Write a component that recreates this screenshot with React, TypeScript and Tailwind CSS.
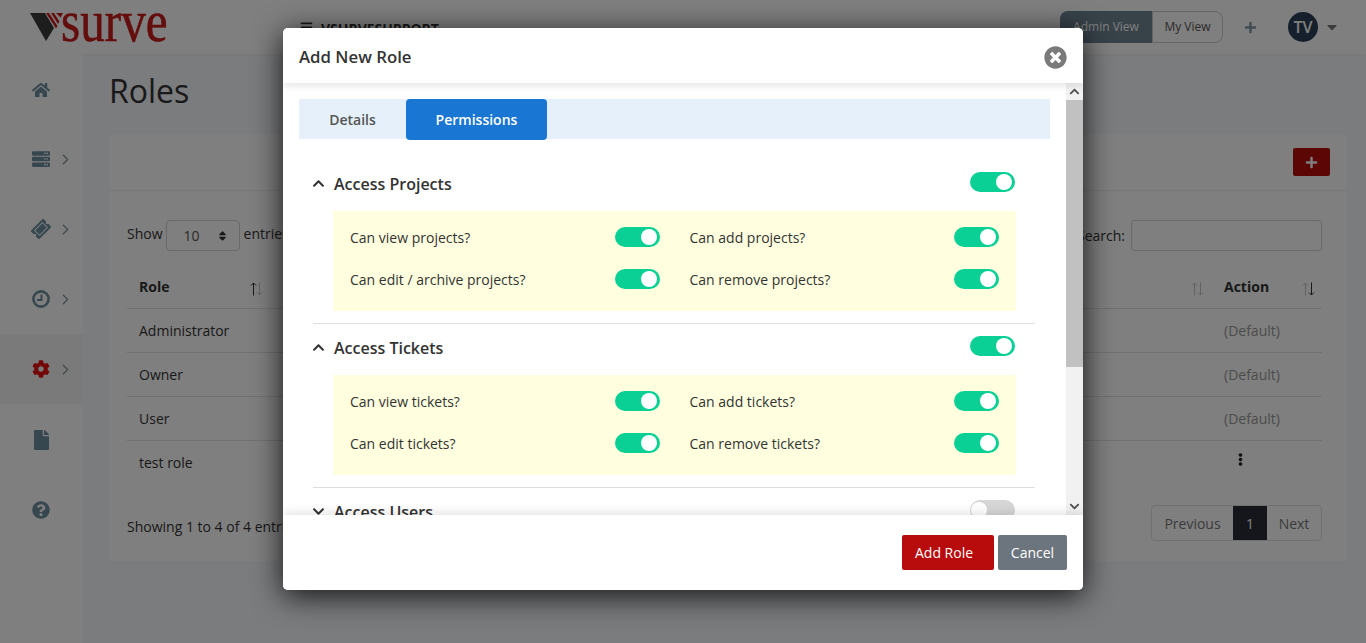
import React from "react";
import { FaHome, FaServer, FaTicketAlt, FaCog, FaFile, FaQuestionCircle, FaTimesCircle, FaPlus, FaChevronUp, FaChevronDown, FaEllipsisV, FaBars, FaCaretDown, FaSort } from "react-icons/fa";
import { LuChevronRight } from "react-icons/lu";

function Toggle({ on = true }: { on?: boolean }) {
  return (
    <div className={on ? "flex h-5 w-[45px] shrink-0 items-center justify-end rounded-full bg-[#0bd095] pr-[3px]" : "flex h-5 w-[45px] shrink-0 items-center justify-start rounded-full bg-[#d6d6d6] pl-[1px]"}>
      <div className="h-4 w-4 rounded-full bg-white" />
    </div>
  );
}

function Perm({ label }: { label: string }) {
  return (
    <div className="flex h-5 items-center justify-between">
      <span className="text-[14px] text-[#333]">{label}</span>
      <Toggle />
    </div>
  );
}

function Section({ title, perms, open = true, on = true, border = true }: { title: string; perms: string[]; open?: boolean; on?: boolean; border?: boolean }) {
  return (
    <div className={border ? "mr-[31px] mb-[13px] ml-[30px] h-[151px] border-b border-[#dedede]" : "mr-[31px] ml-[30px] h-[151px]"}>
      <div className="flex h-5 items-center pr-5">
        <span className="flex w-[21px] justify-start text-[#333]">
          {open ? <FaChevronUp className="-ml-[1px] h-[13px] w-[13px]" /> : <FaChevronDown className="-ml-[1px] h-[13px] w-[13px]" />}
        </span>
        <span className="flex-1 pt-[2px] text-[16px] font-semibold text-[#333]">{title}</span>
        <span className="mb-[2px]"><Toggle on={on} /></span>
      </div>
      <div className="mt-[18px] mr-[19px] ml-5 grid h-[100px] grid-cols-[310px_309.5px] content-start gap-x-[29.5px] gap-y-[22px] bg-[#ffffdf] pt-4 pl-[17px]">
        {perms.map((p) => (
          <Perm key={p} label={p} />
        ))}
      </div>
    </div>
  );
}

function SideItem({ icon, chevron = false, active = false }: { icon: React.ReactNode; chevron?: boolean; active?: boolean }) {
  return (
    <div className={active ? "flex h-[70px] items-center bg-[#f4f4f4] pl-[32px]" : "flex h-[70px] items-center pl-[32px]"}>
      <span className="flex w-[18px] justify-center">{icon}</span>
      {chevron && <LuChevronRight className="ml-[7px] h-[17px] w-[17px] text-[#8a98a0]" />}
    </div>
  );
}

function Sort({ up = false, down = false }: { up?: boolean; down?: boolean }) {
  return (
    <svg width="13" height="14" viewBox="0 0 13 14" fill="none" strokeWidth="1" className="mt-[4px]">
      <path d="M3.500 13.500V1M1 3.500 3.500 1 6 3.500" stroke={up ? "#333" : "#c4c4c4"} />
      <path d="M9.500 .5V13M7 10.500 9.500 13 12 10.500" stroke={down ? "#333" : "#c4c4c4"} />
    </svg>
  );
}

function Row({ name, action, last = false }: { name: string; action: React.ReactNode; last?: boolean }) {
  return (
    <div className={last ? "flex h-11 items-center pb-[2px] text-[14px] text-[#333]" : "flex h-11 items-center border-b border-[#dee2e6] text-[14px] text-[#333]"}>
      <span className="flex-1 pl-3">{name}</span>
      <span className="w-[98px]">{action}</span>
    </div>
  );
}

export default function App() {
  return (
    <div className="relative h-[643px] w-[1366px] overflow-hidden bg-[#f6f8fc] font-['Open_Sans',sans-serif]">
      <header className="flex h-[54px] items-center bg-white shadow-[0_1px_2px_rgba(0,0,0,0.05)]">
        <div className="flex w-[300px] items-center pl-[30px]">
          <svg width="34" height="29" viewBox="0 0 34 29" className="shrink-0">
            <path d="M0 0H15L24 15 16 28Z" fill="#3a3a3a" />
            <path d="M16 0h3l8.500 13-1.500 2.500ZM21 0h3l5.500 8.500L28 11ZM26 0h7l-2.500 4.500Z" fill="#c81a1a" />
          </svg>
          <span className="mb-[12px] -ml-[3px] origin-left scale-x-[0.82] font-['Liberation_Serif',serif] text-[60px] leading-[41px] font-normal text-[#c81a1a] [-webkit-text-stroke:0.6px_#c81a1a]">surve</span>
        </div>
        <FaBars className="h-[13px] w-[13px] text-[#333]" />
        <span className="mt-[2px] ml-2 text-[14px] font-bold text-[#333]">VSURVESUPPORT</span>
        <div className="ml-auto flex items-center">
          <div className="flex h-[32px] text-[12px]">
            <span className="flex w-[92px] items-center justify-center rounded-l-[8px] bg-[#6f8493] text-white">Admin View</span>
            <span className="flex w-[71px] items-center justify-center rounded-r-[8px] border border-[#ccc] text-[#555]">My View</span>
          </div>
          <FaPlus className="ml-[21px] h-[13px] w-[13px] text-[#8398a6]" />
          <span className="ml-[31px] flex h-[30px] w-[30px] items-center justify-center rounded-full bg-[#2a4058] text-[16px] font-semibold text-white">TV</span>
          <FaCaretDown className="mr-[28px] ml-[8px] h-[16px] w-[12px] text-[#777]" />
        </div>
      </header>

      <div className="flex h-[589px]">
        <aside className="w-[83px] shrink-0 bg-white">
          <SideItem icon={<FaHome className="mt-[2px] h-[18px] w-[18px] text-[#6f8f9f]" />} />
          <SideItem chevron icon={<FaServer className="h-[18px] w-[21px] text-[#6f8f9f]" />} />
          <SideItem chevron icon={<FaTicketAlt className="h-[20px] w-[20px] -rotate-45 text-[#6f8f9f]" />} />
          <SideItem chevron icon={
            <svg width="18" height="18" viewBox="0 0 18 18" fill="none" stroke="#6f8f9f" strokeWidth="2.600">
              <circle cx="9" cy="9" r="7.600" />
              <path d="M9.500 4.500V10H5" strokeWidth="2" />
            </svg>
          } />
          <SideItem chevron active icon={<FaCog className="h-[18px] w-[18px] text-[#e60f0f]" />} />
          <SideItem icon={<FaFile className="mt-[2px] h-[20px] w-[17px] text-[#6f8f9f]" />} />
          <SideItem icon={<FaQuestionCircle className="mt-[2px] h-[18px] w-[18px] text-[#6f8f9f]" />} />
        </aside>

        <main className="w-[1283px] pt-[15px] pr-[19px] pl-[26px]">
          <h1 className="text-[32px] leading-[44px] font-normal text-[#333]">Roles</h1>
          <section className="mt-[21px] h-[427px] rounded-[4px] bg-white">
            <div className="flex h-[57px] items-center justify-end border-b border-[#eee] pr-[17px]">
              <span className="flex h-[28px] w-[37px] items-center justify-center rounded-[2px] bg-[#b80c0c]">
                <FaPlus className="h-[13px] w-[13px] text-white" />
              </span>
            </div>
            <div className="pt-[29px] pr-[25px] pl-[18px]">
              <div className="flex h-[31px] items-center text-[14px] text-[#333]">
                <span className="mb-[4px]">Show</span>
                <span className="ml-[3px] flex h-[31px] w-[74px] items-center justify-between rounded-[4px] border border-[#ced4da] pr-[12px] pl-[17px] text-[#555]">
                  10 <FaSort className="h-[12px] w-[9px] text-[#333]" />
                </span>
                <span className="mb-[4px] ml-[4px]">entries</span>
                <span className="ml-auto">Search:</span>
                <span className="ml-[6px] h-[31px] w-[191px] rounded-[3px] border border-[#ced4da]" />
              </div>
              <div className="mt-[20px] flex h-[38px] items-center border-b border-[#dee2e6] pb-[6px] text-[14px] font-bold text-[#333]">
                <span className="flex w-[136px] items-center justify-between pl-3"><span>Role</span><Sort up /></span>
                <span className="flex flex-1 justify-end pr-2"><Sort /></span>
                <span className="flex w-[110px] items-center justify-between pr-[7px] pl-[12px]"><span>Action</span><Sort down /></span>
              </div>
              <Row name="Administrator" action={<span className="text-[#999]">(Default)</span>} />
              <Row name="Owner" action={<span className="text-[#999]">(Default)</span>} />
              <Row name="User" action={<span className="text-[#999]">(Default)</span>} />
              <Row last name="test role" action={<FaEllipsisV className="mb-[6px] ml-[10px] h-[13px] w-[13px] text-[#222]" />} />
              <div className="mt-[20px] flex items-center justify-between text-[14px] text-[#333]">
                <span className="mt-[6px]">Showing 1 to 4 of 4 entries</span>
                <div className="flex h-9 items-stretch rounded-[4px] border border-[#dee2e6] text-[#777]">
                  <span className="flex w-[81px] items-center justify-center">Previous</span>
                  <span className="flex w-[34px] items-center justify-center bg-[#2a2d38] text-white">1</span>
                  <span className="flex w-[54px] items-center justify-center">Next</span>
                </div>
              </div>
            </div>
          </section>
        </main>
      </div>

      <div className="absolute inset-0 bg-black/50" />

      <div className="absolute top-[28px] left-[283px] flex h-[562px] w-[800px] flex-col overflow-hidden rounded-[5px] bg-white text-[#333] shadow-[0_6px_30px_rgba(0,0,0,0.85)]">
        <div className="relative z-10 flex h-[55px] shrink-0 items-center justify-between bg-white pt-[3px] pr-4 pl-4 shadow-[0_2px_8px_rgba(0,0,0,0.12)]">
          <span className="text-[16.8px] font-semibold">Add New Role</span>
          <FaTimesCircle className="h-[23px] w-[23px] text-[#7a7a7a]" />
        </div>

        <div className="flex min-h-0 flex-1">
          <div className="min-w-0 flex-1 overflow-hidden pt-4 pl-4">
            <div className="flex h-10 w-[751px] items-start bg-[#e6f0fa] text-[14px] font-semibold">
              <span className="flex h-10 w-[107px] items-center justify-center text-[#555]">Details</span>
              <span className="flex h-[41px] w-[141px] items-center justify-center rounded-[4px] bg-[#1976d2] text-white">Permissions</span>
            </div>
            <div className="mt-[34px] -ml-4">
              <Section title="Access Projects" perms={["Can view projects?", "Can add projects?", "Can edit / archive projects?", "Can remove projects?"]} />
              <Section title="Access Tickets" perms={["Can view tickets?", "Can add tickets?", "Can edit tickets?", "Can remove tickets?"]} />
              <Section title="Access Users" open={false} on={false} border={false} perms={[]} />
            </div>
          </div>
          <div className="flex w-[17px] shrink-0 flex-col bg-[#f1f1f1]">
            <span className="flex h-[17px] items-center justify-center text-[#505050]"><FaChevronUp className="h-[11px] w-[11px]" /></span>
            <div className="h-[267px] bg-[#c1c1c1]" />
            <span className="mt-auto flex h-[17px] items-center justify-center text-[#505050]"><FaChevronDown className="h-[11px] w-[11px]" /></span>
          </div>
        </div>

        <div className="relative z-10 flex h-[75px] shrink-0 items-center justify-end gap-1 bg-white pr-4 shadow-[0_-2px_10px_rgba(0,0,0,0.12)]">
          <span className="flex h-[35px] w-[92px] items-center rounded-[2px] bg-[#b80c0c] pl-[13px] text-[14px] text-white">Add Role</span>
          <span className="flex h-[35px] w-[69px] items-center justify-center rounded-[2px] bg-[#6c757d] text-[14px] text-white">Cancel</span>
        </div>
      </div>
    </div>
  );
}
